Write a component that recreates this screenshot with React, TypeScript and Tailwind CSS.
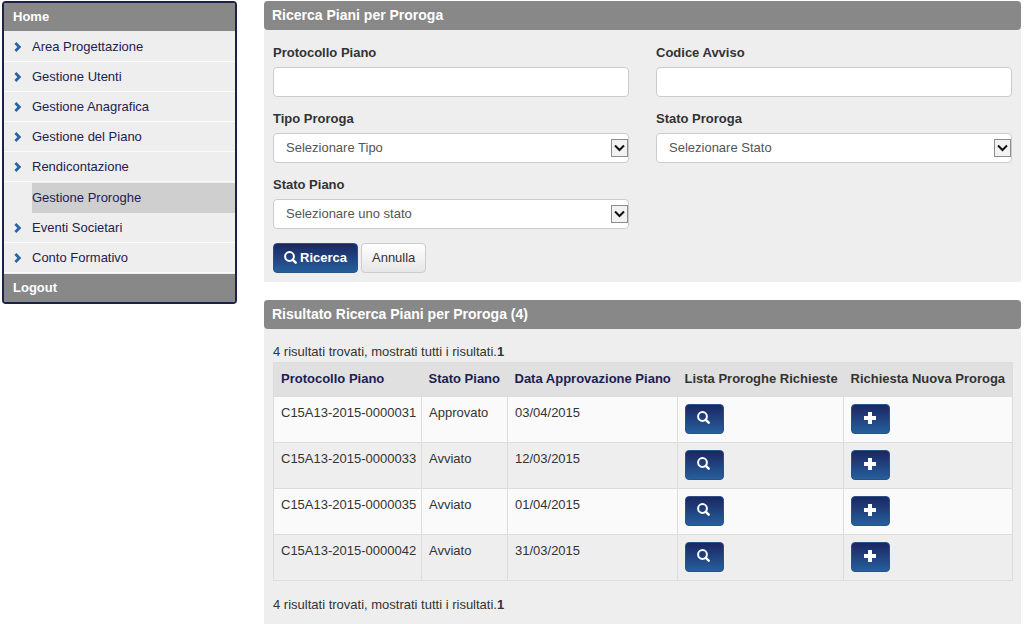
import { useId } from "react";

const menuItems = [
  "Area Progettazione",
  "Gestione Utenti",
  "Gestione Anagrafica",
  "Gestione del Piano",
  "Rendicontazione",
];
const lowerItems = ["Eventi Societari", "Conto Formativo"];

const rows = [
  { protocol: "C15A13-2015-0000031", status: "Approvato", date: "03/04/2015" },
  { protocol: "C15A13-2015-0000033", status: "Avviato", date: "12/03/2015" },
  { protocol: "C15A13-2015-0000035", status: "Avviato", date: "01/04/2015" },
  { protocol: "C15A13-2015-0000042", status: "Avviato", date: "31/03/2015" },
];

function ChevronIcon() {
  return (
    <svg className="h-[10px] w-[8px] shrink-0" viewBox="0 0 8 10" fill="none" aria-hidden="true">
      <path d="M1.4 1.1 5.3 5 1.4 8.9" stroke="#2b64a3" strokeWidth="2.8" />
    </svg>
  );
}

function SearchIcon() {
  return (
    <svg className="h-[13px] w-[13px] shrink-0" viewBox="0 0 13 13" fill="none" aria-hidden="true">
      <circle cx="5.5" cy="5.5" r="4.4" stroke="white" strokeWidth="2" />
      <path d="m8.8 8.8 2.9 2.9" stroke="white" strokeWidth="2.4" strokeLinecap="round" />
    </svg>
  );
}

function PlusIcon() {
  return (
    <svg className="h-[12px] w-[12px] shrink-0" viewBox="0 0 12 12" aria-hidden="true">
      <path d="M4 0h4v4h4v4H8v4H4V8H0V4h4z" fill="white" />
    </svg>
  );
}

function MenuItem({ label }: { label: string }) {
  return (
    <li className="border-b border-[#fbfbfb]">
      <a href="#" className="flex h-[29px] items-center gap-[10px] pl-[10px]">
        <ChevronIcon />
        {label}
      </a>
    </li>
  );
}

function PanelTitle({ children }: { children: React.ReactNode }) {
  return (
    <h2 className="rounded bg-[#888888] px-[8px] text-[14px] leading-[29px] font-bold text-white">
      {children}
    </h2>
  );
}

function TextField({ label }: { label: string }) {
  const id = useId();
  return (
    <div>
      <label htmlFor={id} className="mb-[4px] block leading-[20px] font-bold">
        {label}
      </label>
      <input
        id={id}
        type="text"
        className="block h-[30px] w-full rounded border border-[#cccccc] bg-white px-[12px]"
      />
    </div>
  );
}

function SelectField({ label, option }: { label: string; option: string }) {
  const id = useId();
  return (
    <div>
      <label htmlFor={id} className="mb-[4px] block leading-[20px] font-bold">
        {label}
      </label>
      <div className="relative">
        <select
          id={id}
          className="block h-[30px] w-full appearance-none rounded border border-[#cccccc] bg-white px-[12px] text-[#555555]"
        >
          <option>{option}</option>
        </select>
        <span className="pointer-events-none absolute top-[6px] right-px flex h-[18px] w-[17px] items-center justify-center border border-[#8c8c8c] bg-[#f2f2f2]">
          <svg className="h-[8px] w-[11px]" viewBox="0 0 11 8" fill="none" aria-hidden="true">
            <path d="m1 1.5 4.5 4.5L10 1.5" stroke="#111111" strokeWidth="2" />
          </svg>
        </span>
      </div>
    </div>
  );
}

function IconButton({ label, children }: { label: string; children: React.ReactNode }) {
  return (
    <button
      type="button"
      aria-label={label}
      className="flex h-[30px] w-[39px] items-center justify-center rounded border border-[#2a5285] bg-linear-to-b from-[#1a2763] to-[#265f9d] pr-[2px] pb-[3px]"
    >
      {children}
    </button>
  );
}

export default function App() {
  return (
    <div className="flex min-h-screen items-start gap-[27px] bg-white pt-px pr-[3px] pl-[2px] font-['Liberation_Sans',Arial,sans-serif] text-[13px] text-[#333333]">
      <nav className="mb-[18px] w-[235px] shrink-0 overflow-hidden rounded border-2 border-[#1c2247] bg-[#eeeeee] text-[#1d2150]">
        <a href="#" className="block bg-[#888888] px-[9px] leading-[28px] font-bold text-white">
          Home
        </a>
        <ul className="py-px">
          {menuItems.map((label) => (
            <MenuItem key={label} label={label} />
          ))}
          <li className="pt-px pl-[28px]">
            <a href="#" className="block bg-[#cfcfcf] leading-[30px]">
              Gestione Proroghe
            </a>
          </li>
          {lowerItems.map((label) => (
            <MenuItem key={label} label={label} />
          ))}
        </ul>
        <a href="#" className="block bg-[#888888] px-[9px] leading-[28px] font-bold text-white">
          Logout
        </a>
      </nav>

      <main className="flex min-w-0 flex-1 flex-col gap-[18px] self-stretch">
        <section className="bg-[#eeeeee]">
          <PanelTitle>Ricerca Piani per Proroga</PanelTitle>
          <form className="px-[9px] pt-[13px] pb-[9px]" onSubmit={(e) => e.preventDefault()}>
            <div className="grid grid-cols-2 gap-x-[27px] gap-y-[12px]">
              <TextField label="Protocollo Piano" />
              <TextField label="Codice Avviso" />
              <SelectField label="Tipo Proroga" option="Selezionare Tipo" />
              <SelectField label="Stato Proroga" option="Selezionare Stato" />
              <SelectField label="Stato Piano" option="Selezionare uno stato" />
            </div>
            <div className="mt-[14px] flex gap-[3px]">
              <button
                type="submit"
                className="flex h-[30px] items-center gap-[3px] rounded border border-[#2a5285] bg-linear-to-b from-[#1a2763] to-[#265f9d] px-[10px] font-bold text-white"
              >
                <span className="pb-[2px]">
                  <SearchIcon />
                </span>
                Ricerca
              </button>
              <button
                type="reset"
                className="h-[30px] rounded border border-[#cccccc] bg-linear-to-b from-white to-[#e6e6e6] px-[10px]"
              >
                Annulla
              </button>
            </div>
          </form>
        </section>

        <section className="flex-1 bg-[#eeeeee]">
          <PanelTitle>Risultato Ricerca Piani per Proroga (4)</PanelTitle>
          <div className="px-[9px] pt-[13px] pb-[8px]">
            <p className="leading-[20px]">
              4 risultati trovati, mostrati tutti i risultati.<strong>1</strong>
            </p>
            <table className="w-full table-fixed border-collapse border border-[#dddddd] text-left whitespace-nowrap">
              <colgroup>
                <col className="w-[148px]" />
                <col className="w-[86px]" />
                <col className="w-[170px]" />
                <col className="w-[166px]" />
                <col className="w-[169px]" />
              </colgroup>
              <thead className="bg-[#e0e0e0]">
                <tr className="h-[34px]">
                  <th className="pb-[2px] pl-[7px] text-[#1a1e50]">Protocollo Piano</th>
                  <th className="pb-[2px] pl-[7px] text-[#1a1e50]">Stato Piano</th>
                  <th className="pb-[2px] pl-[7px] text-[#1a1e50]">Data Approvazione Piano</th>
                  <th className="pb-[2px] pl-[7px]">Lista Proroghe Richieste</th>
                  <th className="pb-[2px] pl-[7px]">Richiesta Nuova Proroga</th>
                </tr>
              </thead>
              <tbody>
                {rows.map((row) => (
                  <tr
                    key={row.protocol}
                    className="align-top leading-[18px] odd:bg-[#fafafa] even:bg-[#eeeeee]"
                  >
                    <td className="border border-[#dddddd] py-[7px] pl-[7px]">{row.protocol}</td>
                    <td className="border border-[#dddddd] py-[7px] pl-[7px]">{row.status}</td>
                    <td className="border border-[#dddddd] py-[7px] pl-[7px]">{row.date}</td>
                    <td className="border border-[#dddddd] pt-[7px] pb-[8px] pl-[7px]">
                      <IconButton label={`Lista proroghe ${row.protocol}`}>
                        <SearchIcon />
                      </IconButton>
                    </td>
                    <td className="border border-[#dddddd] pt-[7px] pb-[8px] pl-[7px]">
                      <IconButton label={`Nuova proroga ${row.protocol}`}>
                        <PlusIcon />
                      </IconButton>
                    </td>
                  </tr>
                ))}
              </tbody>
            </table>
            <p className="mt-[14px] leading-[20px]">
              4 risultati trovati, mostrati tutti i risultati.<strong>1</strong>
            </p>
          </div>
        </section>
      </main>
    </div>
  );
}
